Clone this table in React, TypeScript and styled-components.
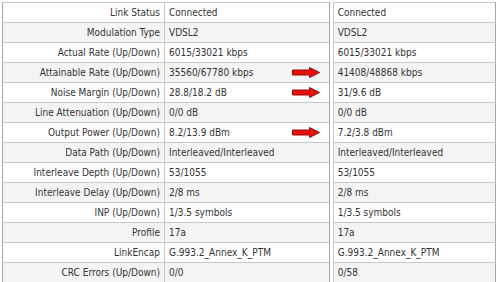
import React from "react";
import styled, { createGlobalStyle } from "styled-components";

const Global = createGlobalStyle`
  html, body { margin: 0; padding: 0; background: #fff; }
  body {
    font-family: "DejaVu Sans Condensed", "DejaVu Sans", Tahoma, sans-serif;
    font-stretch: condensed;
    font-size: 10px;
    color: #333;
  }
`;

const Page = styled.div`
  display: flex;
  gap: 3px;
  padding: 2px 4px 0 2px;
  align-items: flex-start;
`;

const Table = styled.table<{ $w: number }>`
  width: ${(p) => p.$w}px;
  border-collapse: collapse;
  border: 1px solid #a8a8a8;
  table-layout: fixed;
`;

const Row = styled.tr<{ $alt: boolean }>`
  background: ${(p) => (p.$alt ? "#f4f4f4" : "#ffffff")};
  height: 20px;
`;

const Label = styled.td`
  width: 153px;
  text-align: right;
  padding: 0 4px 0 4px;
  border: 1px solid #c8c8c8;
  border-left-color: #a8a8a8;
  white-space: nowrap;
  height: 19px;
  line-height: 19px;
`;

const Value = styled.td`
  text-align: left;
  padding: 0 4px;
  border: 1px solid #c8c8c8;
  border-right-color: #a8a8a8;
  white-space: nowrap;
  height: 19px;
  line-height: 19px;
`;

const ValueInner = styled.div`
  display: flex;
  align-items: center;
  justify-content: space-between;
`;

const Arrow = () => (
  <svg width="28" height="11" viewBox="0 0 28 11" style={{ marginRight: 5 }}>
    <path
      d="M0.5 3 H17.5 V0.5 L27.5 5.5 L17.5 10.5 V8 H0.5 Z"
      fill="#e8100c"
      stroke="#9a0a06"
      strokeWidth="1"
    />
  </svg>
);

const rows: [string, string, string, boolean][] = [
  ["Link Status", "Connected", "Connected", false],
  ["Modulation Type", "VDSL2", "VDSL2", false],
  ["Actual Rate (Up/Down)", "6015/33021 kbps", "6015/33021 kbps", false],
  ["Attainable Rate (Up/Down)", "35560/67780 kbps", "41408/48868 kbps", true],
  ["Noise Margin (Up/Down)", "28.8/18.2 dB", "31/9.6 dB", true],
  ["Line Attenuation (Up/Down)", "0/0 dB", "0/0 dB", false],
  ["Output Power (Up/Down)", "8.2/13.9 dBm", "7.2/3.8 dBm", true],
  ["Data Path (Up/Down)", "Interleaved/Interleaved", "Interleaved/Interleaved", false],
  ["Interleave Depth (Up/Down)", "53/1055", "53/1055", false],
  ["Interleave Delay (Up/Down)", "2/8 ms", "2/8 ms", false],
  ["INP (Up/Down)", "1/3.5 symbols", "1/3.5 symbols", false],
  ["Profile", "17a", "17a", false],
  ["LinkEncap", "G.993.2_Annex_K_PTM", "G.993.2_Annex_K_PTM", false],
  ["CRC Errors (Up/Down)", "0/0", "0/58", false],
];

export default function App() {
  return (
    <>
      <Global />
      <Page>
        <Table $w={329}>
          <tbody>
            {rows.map(([l, v, , arrow], i) => (
              <Row key={l} $alt={i % 2 === 1}>
                <Label>{l}</Label>
                <Value>
                  <ValueInner>
                    <span>{v}</span>
                    {arrow && <Arrow />}
                  </ValueInner>
                </Value>
              </Row>
            ))}
          </tbody>
        </Table>
        <Table $w={164}>
          <tbody>
            {rows.map(([l, , v2], i) => (
              <Row key={l} $alt={i % 2 === 1}>
                <Value>{v2}</Value>
              </Row>
            ))}
          </tbody>
        </Table>
      </Page>
    </>
  );
}
